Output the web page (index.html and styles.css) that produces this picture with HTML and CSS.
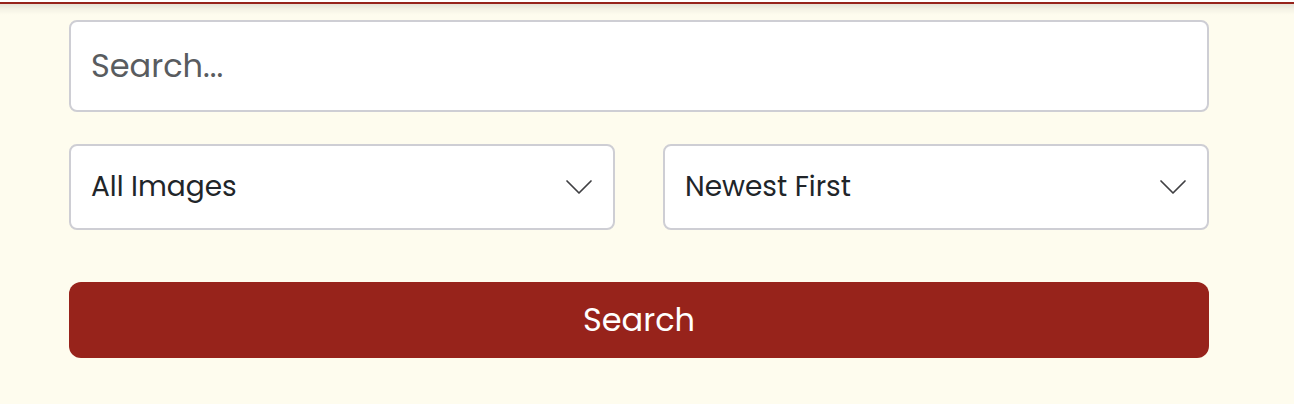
FILE: index.html
```
<!DOCTYPE html>
<html lang="en">
<head>
<meta charset="utf-8">
<meta name="viewport" content="width=device-width, initial-scale=1">
<title>Search images</title>
<link rel="stylesheet" href="styles.css">
</head>
<body>
<header class="topbar"></header>
<main class="page">
  <form class="search-form">
    <input class="field search-input" type="search" placeholder="Search..." aria-label="Search">
    <div class="filters">
      <div class="select-wrap">
        <select class="field select" aria-label="Image category">
          <option>All Images</option>
        </select>
        <svg class="chevron" viewBox="0 0 32 32" aria-hidden="true"><path d="M4 10l12 12 12-12"/></svg>
      </div>
      <div class="select-wrap">
        <select class="field select" aria-label="Sort order">
          <option>Newest First</option>
        </select>
        <svg class="chevron" viewBox="0 0 32 32" aria-hidden="true"><path d="M4 10l12 12 12-12"/></svg>
      </div>
    </div>
    <button class="submit" type="submit">Search</button>
  </form>
</main>
</body>
</html>
```
FILE: styles.css
```
* {
  box-sizing: border-box;
}

body {
  margin: 0;
  background: #fefcee;
  color: #212529;
  font-family: Poppins, Inter, "Liberation Sans", sans-serif;
}

.topbar {
  height: 4px;
  background: #fff;
  border-bottom: 2px solid #96231b;
}

.page {
  padding: 16px 85px 46px 69px;
  background: linear-gradient(rgba(0, 0, 0, 0.1), rgba(0, 0, 0, 0.04) 5px, transparent 11px);
}

.search-form {
  display: flex;
  flex-direction: column;
}

.field {
  display: block;
  width: 100%;
  margin: 0;
  padding: 20px;
  border: 2px solid #ceced4;
  border-radius: 8px;
  background: #fff;
  color: #212529;
  font-family: inherit;
  appearance: none;
}

.search-input {
  height: 92px;
  font-size: 32px;
}

.search-input::placeholder {
  color: #595c5f;
  opacity: 1;
}

.filters {
  display: grid;
  grid-template-columns: 1fr 1fr;
  gap: 48px;
  margin-top: 32px;
}

.select-wrap {
  display: grid;
  align-items: center;
}

.select-wrap > * {
  grid-area: 1 / 1;
}

.select {
  height: 86px;
  padding-top: 18px;
  font-size: 28px;
}

.chevron {
  justify-self: end;
  width: 32px;
  height: 32px;
  margin-right: 20px;
  fill: none;
  stroke: #404043;
  stroke-width: 1.7;
  stroke-linecap: round;
  stroke-linejoin: round;
  pointer-events: none;
}

.submit {
  height: 76px;
  margin-top: 52px;
  border: 0;
  border-radius: 12px;
  background: #97231b;
  color: #fff;
  font-family: inherit;
  font-size: 32px;
}
```
